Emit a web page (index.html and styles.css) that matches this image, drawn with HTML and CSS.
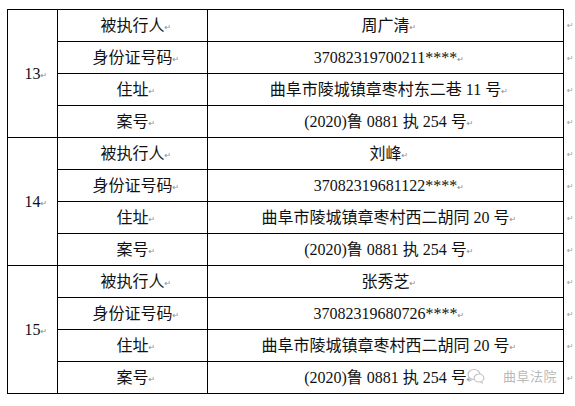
FILE: index.html
```html
<!DOCTYPE html>
<html lang="zh-CN">
<head>
<meta charset="utf-8">
<title>被执行人名单</title>
<link rel="stylesheet" href="styles.css">
</head>
<body>
<div class="sheet">
  <div class="cell no top"><span class="txt">13<span class="pm">↵</span></span></div>
  <div class="cell label top"><span class="txt">被执行人<span class="pm">↵</span></span></div>
  <div class="cell val top"><span class="txt">周广清<span class="pm">↵</span></span></div>
  <div class="eor">↵</div>
  <div class="cell label"><span class="txt">身份证号码<span class="pm">↵</span></span></div>
  <div class="cell val"><span class="txt">37082319700211****<span class="pm">↵</span></span></div>
  <div class="eor">↵</div>
  <div class="cell label"><span class="txt">住址<span class="pm">↵</span></span></div>
  <div class="cell val"><span class="txt">曲阜市陵城镇章枣村东二巷 11 号<span class="pm">↵</span></span></div>
  <div class="eor">↵</div>
  <div class="cell label"><span class="txt">案号<span class="pm">↵</span></span></div>
  <div class="cell val"><span class="txt">(2020)鲁 0881 执 254 号<span class="pm">↵</span></span></div>
  <div class="eor">↵</div>

  <div class="cell no"><span class="txt">14<span class="pm">↵</span></span></div>
  <div class="cell label"><span class="txt">被执行人<span class="pm">↵</span></span></div>
  <div class="cell val"><span class="txt">刘峰<span class="pm">↵</span></span></div>
  <div class="eor">↵</div>
  <div class="cell label"><span class="txt">身份证号码<span class="pm">↵</span></span></div>
  <div class="cell val"><span class="txt">37082319681122****<span class="pm">↵</span></span></div>
  <div class="eor">↵</div>
  <div class="cell label"><span class="txt">住址<span class="pm">↵</span></span></div>
  <div class="cell val"><span class="txt">曲阜市陵城镇章枣村西二胡同 20 号<span class="pm">↵</span></span></div>
  <div class="eor">↵</div>
  <div class="cell label"><span class="txt">案号<span class="pm">↵</span></span></div>
  <div class="cell val"><span class="txt">(2020)鲁 0881 执 254 号<span class="pm">↵</span></span></div>
  <div class="eor">↵</div>

  <div class="cell no"><span class="txt">15<span class="pm">↵</span></span></div>
  <div class="cell label"><span class="txt">被执行人<span class="pm">↵</span></span></div>
  <div class="cell val"><span class="txt">张秀芝<span class="pm">↵</span></span></div>
  <div class="eor">↵</div>
  <div class="cell label"><span class="txt">身份证号码<span class="pm">↵</span></span></div>
  <div class="cell val"><span class="txt">37082319680726****<span class="pm">↵</span></span></div>
  <div class="eor">↵</div>
  <div class="cell label"><span class="txt">住址<span class="pm">↵</span></span></div>
  <div class="cell val"><span class="txt">曲阜市陵城镇章枣村西二胡同 20 号<span class="pm">↵</span></span></div>
  <div class="eor">↵</div>
  <div class="cell label"><span class="txt">案号<span class="pm">↵</span></span></div>
  <div class="cell val"><span class="txt">(2020)鲁 0881 执 254 号<span class="pm">↵</span></span></div>
  <div class="eor">↵</div>
</div>

<div class="watermark">
  <svg class="wm-icon" width="18" height="16" viewBox="0 0 18 16">
    <ellipse cx="7" cy="6.5" rx="6" ry="5" fill="#fff" stroke="#c4c4c4" stroke-width="1.2"/>
    <path d="M3.5 10.5 L2.6 13 L5.6 11.2" fill="#fff" stroke="#c4c4c4" stroke-width="1.1"/>
    <ellipse cx="12" cy="10" rx="4.8" ry="4" fill="#fff" stroke="#c4c4c4" stroke-width="1.2"/>
    <path d="M14.5 13.4 L15.6 15.3 L13 14" fill="#fff" stroke="#c4c4c4" stroke-width="1"/>
  </svg>
  <span class="wm-text">曲阜法院</span>
</div>
</body>
</html>
```

FILE: styles.css
```css
html, body {
  margin: 0;
  padding: 0;
  background: #ffffff;
}

body {
  font-family: "Liberation Serif", "Noto Sans CJK SC", serif;
  font-size: 16px;
  color: #111;
}

.sheet {
  display: grid;
  grid-template-columns: 51px 150px 356px 12px;
  grid-template-rows: 33px repeat(11, 32px);
  margin: 9px 0 0 7px;
  width: 569px;
}

.cell {
  box-sizing: border-box;
  border-right: 1px solid #000;
  border-bottom: 1px solid #000;
  display: flex;
  align-items: center;
  justify-content: center;
  white-space: nowrap;
}

.cell.top {
  border-top: 1px solid #000;
}

.no {
  grid-row: span 4;
  border-left: 1px solid #000;
}

.txt {
  line-height: 1;
}

.pm {
  display: inline-block;
  width: 0;
  overflow: visible;
  font-family: "DejaVu Sans", sans-serif;
  font-size: 8px;
  color: #8a8a8a;
  vertical-align: 1px;
}

.eor {
  display: flex;
  align-items: center;
  padding-left: 3px;
  font-family: "DejaVu Sans", sans-serif;
  font-size: 8px;
  color: #9a9a9a;
}

.watermark {
  position: absolute;
  left: 467px;
  top: 366px;
  display: flex;
  align-items: center;
  gap: 18px;
}

.wm-text {
  font-family: "Noto Sans CJK SC", sans-serif;
  font-size: 13px;
  color: #b9b9b9;
  letter-spacing: 0.5px;
}
```
